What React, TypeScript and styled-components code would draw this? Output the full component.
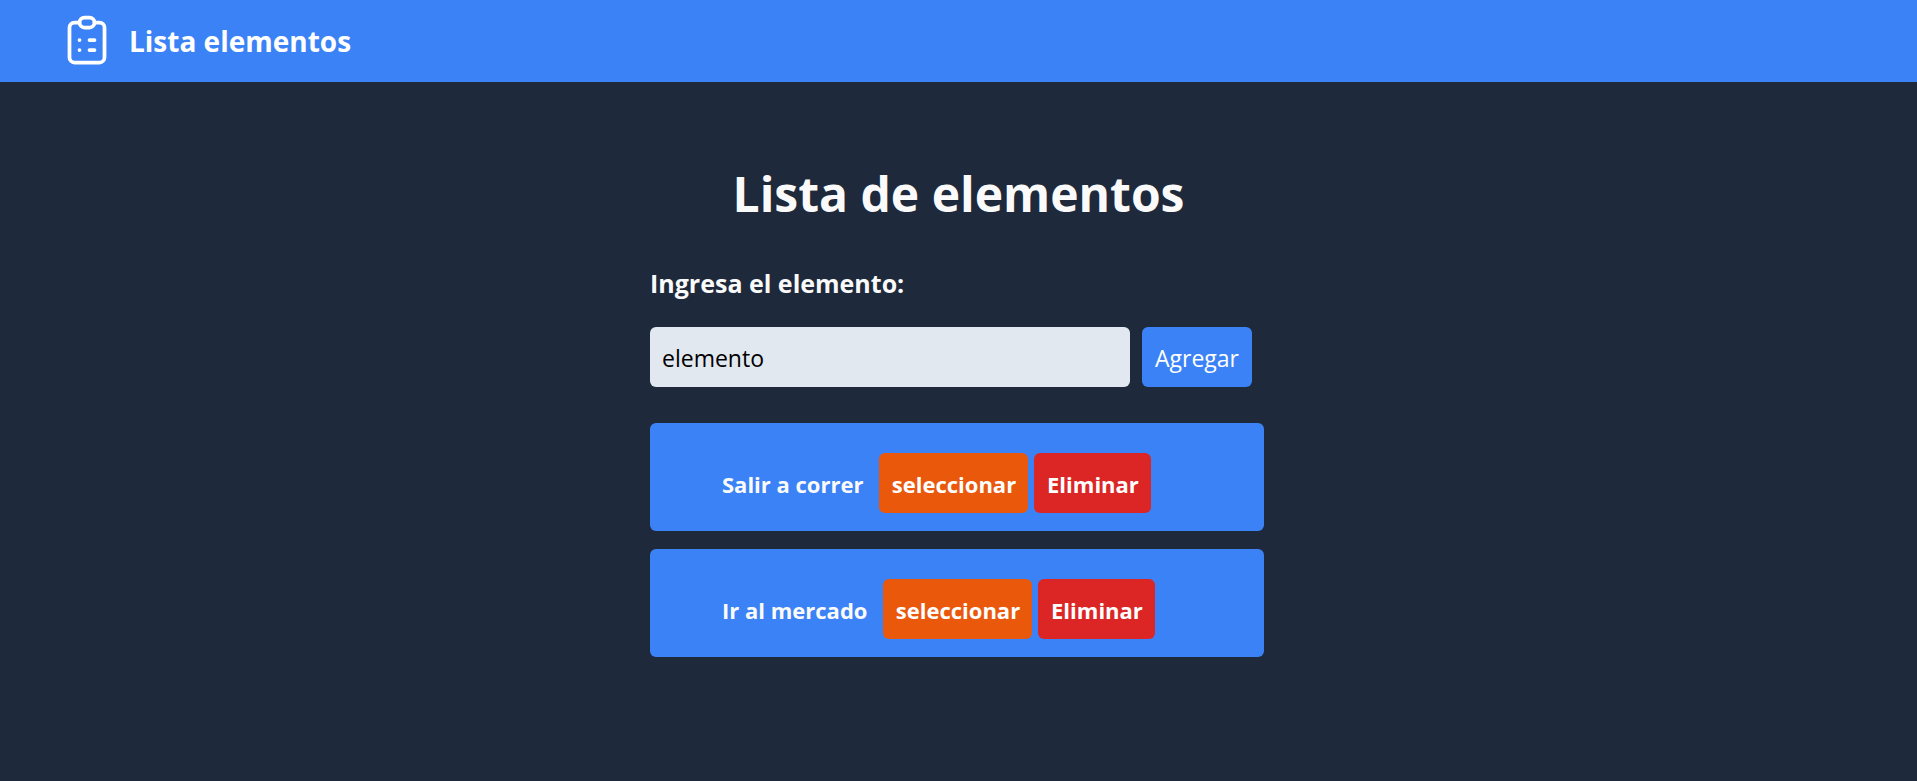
import React, { useState } from "react";
import styled, { createGlobalStyle } from "styled-components";

const GlobalStyle = createGlobalStyle`
  *, *::before, *::after { box-sizing: border-box; }
  body {
    margin: 0;
    background: #1e293b;
    color: #fafafa;
    font-family: "Segoe UI", "Open Sans", "Noto Sans", sans-serif;
  }
  h1, h2, ul, p { margin: 0; padding: 0; }
  button, input { font: inherit; border: 0; }
`;

const Header = styled.header`
  display: flex;
  align-items: center;
  gap: 12px;
  height: 82px;
  padding: 0 57px 2px;
  background: #3b82f6;
  color: #fff;
`;

const Brand = styled.p`
  padding-top: 2px;
  font-size: 28px;
  line-height: 40px;
  font-weight: 700;
`;

const Title = styled.h1`
  margin-top: 82px;
  font-size: 48px;
  line-height: 60px;
  font-weight: 700;
  text-align: center;
`;

const Content = styled.main`
  max-width: 617px;
  margin: 0 auto;
  padding-right: 3px;
`;

const Form = styled.form`
  display: grid;
  grid-template-columns: 480px auto;
  justify-content: start;
  column-gap: 12px;
  margin-top: 38px;
`;

const Label = styled.label`
  grid-column: 1 / -1;
  margin-bottom: 23px;
  font-size: 25px;
  line-height: 42px;
  font-weight: 700;
`;

const TextField = styled.input`
  height: 60px;
  padding: 2px 12px 0;
  border-radius: 6px;
  background: #e2e8f0;
  color: #000;
  font-size: 23px;
  &::placeholder { color: #000; opacity: 1; }
`;

const Button = styled.button<{ $color: string; $width: number }>`
  width: ${(p) => p.$width}px;
  height: 60px;
  padding: 2px 0 0;
  border-radius: 6px;
  background: ${(p) => p.$color};
  color: #fff;
  font-size: 23px;
  cursor: pointer;
`;

const ItemButton = styled(Button)`
  font-size: 22px;
`;

const List = styled.ul`
  display: grid;
  gap: 18px;
  margin-top: 36px;
  list-style: none;
`;

const Item = styled.li`
  display: flex;
  align-items: center;
  gap: 6px;
  padding: 30px 72px 18px;
  border-radius: 6px;
  background: #3b82f6;
  font-weight: 700;
`;

const ItemText = styled.span`
  margin-right: 10px;
  padding-top: 2px;
  font-size: 22px;
`;

const ClipboardIcon = () => (
  <svg
    width="60"
    height="60"
    viewBox="0 0 24 24"
    fill="none"
    stroke="currentColor"
    strokeWidth="1.5"
    strokeLinecap="round"
    strokeLinejoin="round"
    aria-hidden="true"
  >
    <path d="M9 5h-2a2 2 0 0 0 -2 2v12a2 2 0 0 0 2 2h10a2 2 0 0 0 2 -2v-12a2 2 0 0 0 -2 -2h-2" />
    <path d="M9 5a2 2 0 0 1 2 -2h2a2 2 0 0 1 2 2a2 2 0 0 1 -2 2h-2a2 2 0 0 1 -2 -2z" />
    <path d="M9 12h.01M13 12h2M9 16h.01M13 16h2" />
  </svg>
);

export default function App() {
  const [items, setItems] = useState(["Salir a correr", "Ir al mercado"]);
  const [text, setText] = useState("");

  const add = (e: React.FormEvent) => {
    e.preventDefault();
    if (text.trim()) {
      setItems([...items, text.trim()]);
      setText("");
    }
  };

  return (
    <>
      <GlobalStyle />
      <Header>
        <ClipboardIcon />
        <Brand>Lista elementos</Brand>
      </Header>
      <Title>Lista de elementos</Title>
      <Content>
        <Form onSubmit={add}>
          <Label htmlFor="elemento">Ingresa el elemento:</Label>
          <TextField
            id="elemento"
            placeholder="elemento"
            value={text}
            onChange={(e) => setText(e.target.value)}
          />
          <Button type="submit" $color="#3b82f6" $width={110}>Agregar</Button>
        </Form>
        <List>
          {items.map((item, i) => (
            <Item key={i}>
              <ItemText>{item}</ItemText>
              <ItemButton type="button" $color="#ea580c" $width={149} onClick={() => setText(item)}>
                seleccionar
              </ItemButton>
              <ItemButton
                type="button"
                $color="#dc2626"
                $width={117}
                onClick={() => setItems(items.filter((_, n) => n !== i))}
              >
                Eliminar
              </ItemButton>
            </Item>
          ))}
        </List>
      </Content>
    </>
  );
}
